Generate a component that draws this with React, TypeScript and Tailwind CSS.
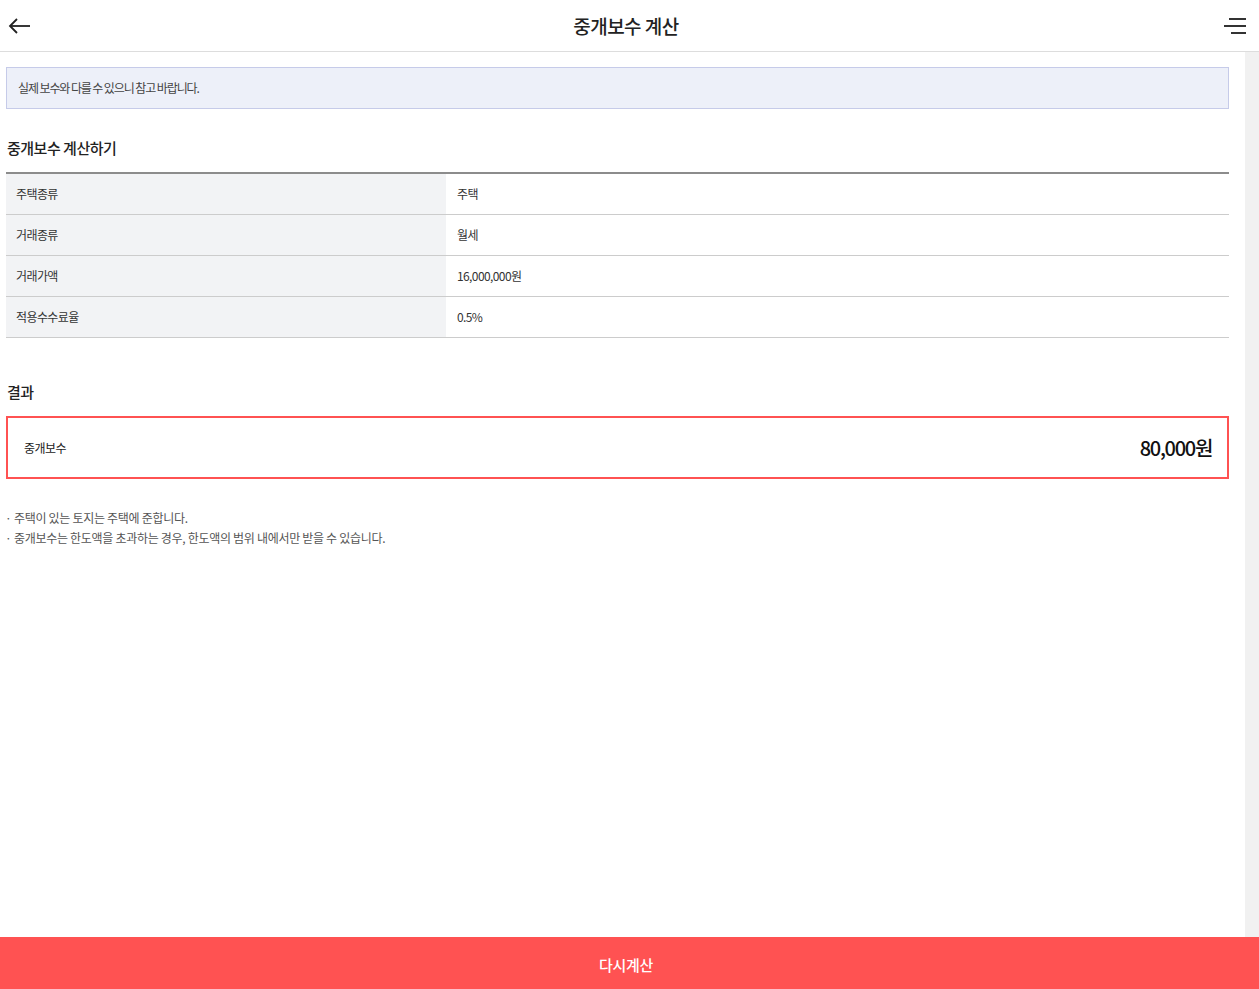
const rows = [
  { label: '주택종류', value: '주택' },
  { label: '거래종류', value: '월세' },
  { label: '거래가액', value: '16,000,000원' },
  { label: '적용수수료율', value: '0.5%' },
];

const notes = [
  '주택이 있는 토지는 주택에 준합니다.',
  '중개보수는 한도액을 초과하는 경우, 한도액의 범위 내에서만 받을 수 있습니다.',
];

function BackIcon() {
  return (
    <svg width="24" height="16" viewBox="0 0 24 16" fill="none" stroke="#222" strokeWidth="1.8">
      <path d="M22 8H2" />
      <path d="M9 1L2 8l7 7" />
    </svg>
  );
}

function MenuIcon() {
  return (
    <svg width="24" height="18" viewBox="0 0 24 18" fill="#333">
      <rect x="6" y="1" width="17" height="2" />
      <rect x="1" y="8" width="22" height="2" />
      <rect x="8" y="15" width="15" height="2" />
    </svg>
  );
}

export default function App() {
  return (
    <div className="flex h-screen flex-col bg-white font-['Noto_Sans_CJK_KR','Noto_Sans',sans-serif] text-[#222]">
      <header className="flex h-[52px] shrink-0 items-center border-b border-[#dddddd] px-[8px]">
        <button className="flex h-[30px] w-[30px] items-center">
          <BackIcon />
        </button>
        <h1 className="flex-1 pr-[7px] pt-[2px] text-center text-[19px] font-medium tracking-[-0.5px] text-[#222]">
          중개보수 계산
        </h1>
        <button className="flex h-[30px] w-[30px] items-center justify-end pr-[4px]">
          <MenuIcon />
        </button>
      </header>

      <div className="flex min-h-0 flex-1">
        <main className="flex-1 pl-[6px] pr-[16px] pt-[15px]">
          <div className="flex h-[42px] items-center border border-[#c6cbe9] bg-[#edf0f9] px-[11px] text-[12px] tracking-[-1.1px] text-[#444]">
            실제 보수와 다를 수 있으니 참고 바랍니다.
          </div>

          <h2 className="mt-[29px] pl-[1px] text-[15px] font-medium leading-[20px] tracking-[-0.5px] text-[#222]">
            중개보수 계산하기
          </h2>
          <div className="mt-[14px] border-t-2 border-[#8c8c8c]">
            {rows.map((row) => (
              <div key={row.label} className="flex h-[41px] border-b border-[#cccccc] text-[12px] tracking-[-0.6px] text-[#333]">
                <div className="flex w-[440px] items-center bg-[#f2f3f5] pl-[10px]">{row.label}</div>
                <div className="flex flex-1 items-center pl-[11px]">{row.value}</div>
              </div>
            ))}
          </div>

          <h2 className="mt-[44px] pl-[1px] text-[15px] font-medium leading-[20px] tracking-[-0.5px] text-[#222]">결과</h2>
          <div className="mt-[14px] flex h-[63px] items-center justify-between border-2 border-[#ff5252] pl-[16px] pr-[15px]">
            <span className="text-[12px] tracking-[-0.5px] text-[#222]">중개보수</span>
            <span className="text-[20px] font-medium tracking-[-1.3px] text-[#111]">80,000원</span>
          </div>

          <ul className="mt-[29px] text-[12px] leading-[20px] tracking-[-0.3px] text-[#555]">
            {notes.map((note) => (
              <li key={note} className="-ml-[1px] flex">
                <span className="w-[9px] shrink-0">·</span>
                <span>{note}</span>
              </li>
            ))}
          </ul>
        </main>
        <div className="w-[14px] shrink-0 bg-[#f1f1f1]" />
      </div>

      <button className="flex h-[52px] shrink-0 items-center justify-center bg-[#ff5252] pr-[7px] pt-[4px] text-[15px] font-medium tracking-[-0.3px] text-white">
        다시계산
      </button>
    </div>
  );
}
